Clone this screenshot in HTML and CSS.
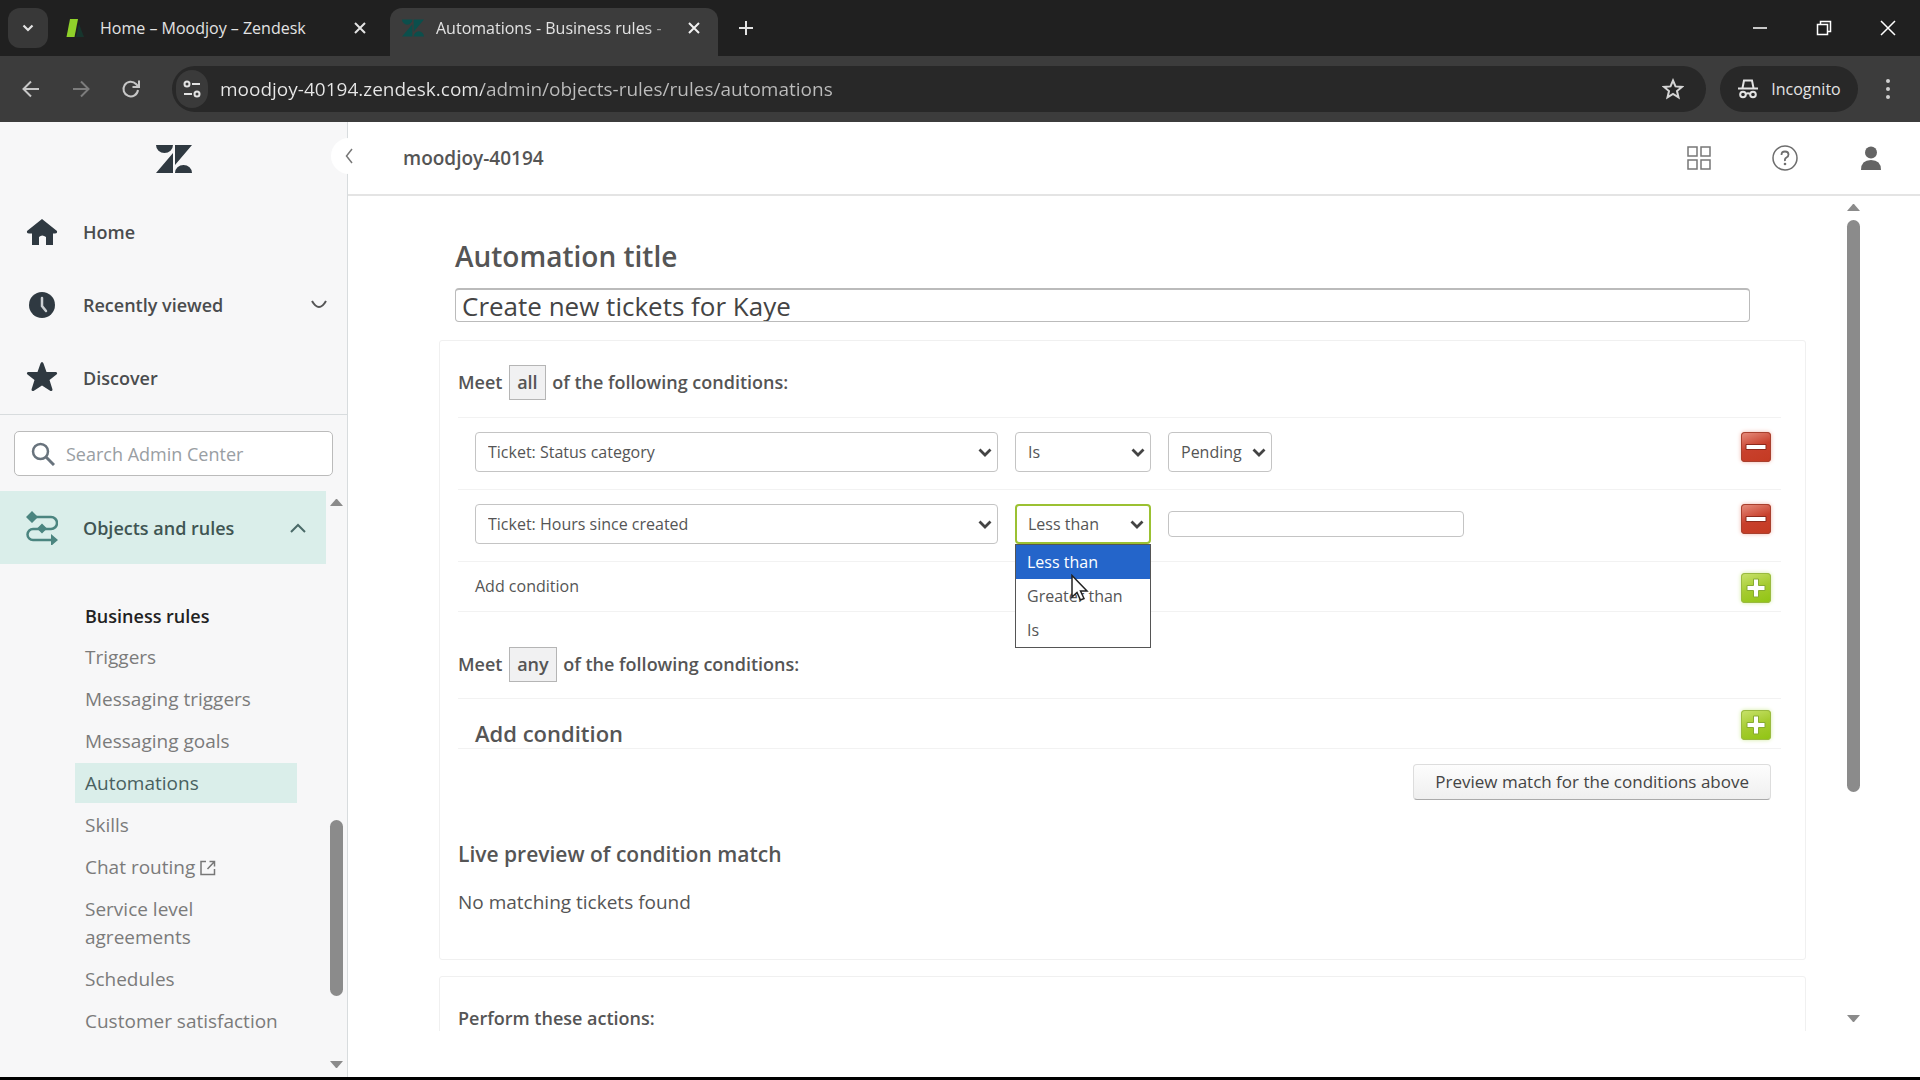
FILE: index.html
```html
<!DOCTYPE html>
<html lang="en">
<head>
    <meta charset="UTF-8">
    <title>Automations - Business rules - Admin Center</title>
    <link rel="stylesheet" href="styles.css">
</head>
<body>
    <div class="tabstrip">
        <button class="tab-search" aria-label="Search tabs">
            <svg width="16" height="16" viewBox="0 0 16 16"><path d="M3.5 5.5 8 10l4.500-4.500" fill="none" stroke="#e3e3e3" stroke-width="2.200"/></svg>
        </button>
        <div class="tab">
            <svg width="24" height="24" viewBox="0 0 24 24"><path d="M6 3h8l-3.500 18h-8z" fill="#8fd12a"/><path d="M15 8l5 13h-8z" fill="#17352d"/></svg>
            <span class="tab-title">Home – Moodjoy – Zendesk</span>
            <button class="tab-close" aria-label="Close tab"><svg width="14" height="14" viewBox="0 0 14 14"><path d="M2 2l10 10M12 2L2 12" stroke="#e3e3e3" stroke-width="2"/></svg></button>
        </div>
        <div class="tab active">
            <svg width="22" height="18" viewBox="0 0 36 28"><path d="M0 0h17a8.500 8.500 0 0 1-17 0zM17 8v20H0zM19 0h17L19 20zM19 28a8.500 8.500 0 0 1 17 0z" fill="#0b4f4c"/></svg>
            <span class="tab-title fade">Automations - Business rules -</span>
            <button class="tab-close" aria-label="Close tab"><svg width="14" height="14" viewBox="0 0 14 14"><path d="M2 2l10 10M12 2L2 12" stroke="#f1f1f1" stroke-width="2"/></svg></button>
        </div>
        <button class="tab-new" aria-label="New tab"><svg width="18" height="18" viewBox="0 0 18 18"><path d="M9 2v14M2 9h14" stroke="#e3e3e3" stroke-width="2"/></svg></button>
        <div class="window-buttons">
            <button aria-label="Minimize"><svg width="16" height="16" viewBox="0 0 16 16"><path d="M1 8h14" stroke="#fff" stroke-width="1.500"/></svg></button>
            <button aria-label="Restore"><svg width="16" height="16" viewBox="0 0 16 16"><path d="M1.500 4.500h10v10h-10zM4.500 4V1.500h10v10H12" fill="none" stroke="#fff" stroke-width="1.500"/></svg></button>
            <button aria-label="Close"><svg width="16" height="16" viewBox="0 0 16 16"><path d="M1 1l14 14M15 1L1 15" stroke="#fff" stroke-width="1.500"/></svg></button>
        </div>
    </div>

    <div class="toolbar">
        <button class="nav-btn" aria-label="Back"><svg width="20" height="20" viewBox="0 0 20 20"><path d="M18 10H3M10 2.500 2.500 10l7.500 7.500" fill="none" stroke="#c7c7c7" stroke-width="2"/></svg></button>
        <button class="nav-btn" aria-label="Forward"><svg width="20" height="20" viewBox="0 0 20 20"><path d="M2 10h15M10 2.500l7.500 7.500-7.500 7.500" fill="none" stroke="#7c7c7c" stroke-width="2"/></svg></button>
        <button class="nav-btn" aria-label="Reload"><svg width="20" height="20" viewBox="0 0 20 20"><path d="M17 11a7.300 7.300 0 1 1-2-6l2.500 2.500M18 1.500V8h-6.500" fill="none" stroke="#c7c7c7" stroke-width="2"/></svg></button>
        <div class="omnibox">
            <button class="site-info" aria-label="Site information"><svg width="20" height="20" viewBox="0 0 20 20"><g fill="none" stroke="#e3e3e3" stroke-width="2"><circle cx="5" cy="5" r="2.500"/><path d="M10 5h8M2 15h8"/><circle cx="15" cy="15" r="2.500"/></g></svg></button>
            <input class="url" type="text" aria-label="Address" value="moodjoy-40194.zendesk.com/admin/objects-rules/rules/automations">
            <button class="bookmark" aria-label="Bookmark"><svg width="22" height="22" viewBox="0 0 22 22"><path d="M11 2.500l2.500 5.900 6.400.5-4.900 4.200 1.500 6.300-5.500-3.400-5.500 3.400L7 13.100 2.100 8.900l6.400-.5z" fill="none" stroke="#d5d5d5" stroke-width="2"/></svg></button>
        </div>
        <button class="incognito">
            <svg width="22" height="22" viewBox="0 0 22 22"><g fill="none" stroke="#e3e3e3" stroke-width="2"><path d="M1 10.500h20M5.500 10l1.500-7.500h8L16.500 10"/><circle cx="6" cy="16.500" r="2.800"/><circle cx="16" cy="16.500" r="2.800"/><path d="M8.800 16c1.500-1 2.900-1 4.400 0"/></g></svg>
            Incognito
        </button>
        <button class="menu" aria-label="Menu"><svg width="6" height="22" viewBox="0 0 6 22"><g fill="#d0d0d0"><circle cx="3" cy="3" r="2"/><circle cx="3" cy="11" r="2"/><circle cx="3" cy="19" r="2"/></g></svg></button>
    </div>

    <div class="page">
        <nav class="sidebar">
            <a class="logo" href="#" aria-label="Zendesk"><svg width="36" height="28" viewBox="0 0 36 28"><path d="M0 0h17a8.500 8 0 0 1-17 0zM17 8v20H0zM19 0h17L19 20zM19 28a8.500 8 0 0 1 17 0z" fill="#2f3941"/></svg></a>
            <button class="collapse" aria-label="Collapse sidebar"><svg width="8" height="16" viewBox="0 0 8 16"><path d="M7 1 1.500 8 7 15" fill="none" stroke="#777" stroke-width="1.500"/></svg></button>
            <a class="nav-item" href="#">
                <svg width="32" height="28" viewBox="0 0 32 28"><path d="M16 1 31 13q.5 2.500-2 2.500h-2V27h-7v-8q-4-3-7 0v8H6V15.500H3q-2.500 0-2-2.500z" fill="#2f3941"/></svg>
                Home
            </a>
            <a class="nav-item" href="#">
                <svg width="32" height="28" viewBox="0 0 32 28"><circle cx="16" cy="14" r="13" fill="#2f3941"/><path d="M16 7v8l4 5" fill="none" stroke="#ccd0d3" stroke-width="2.500" stroke-linecap="round"/></svg>
                Recently viewed
                <svg class="chev" width="16" height="9" viewBox="0 0 16 9"><path d="M1 1q7 12 14 0" fill="none" stroke="#555" stroke-width="2"/></svg>
            </a>
            <a class="nav-item" href="#">
                <svg width="32" height="32" viewBox="0 0 32 32"><path d="M16 0q1 0 1.500 1.500L20.500 10H30q2 1 .5 2.500L23.500 18l3 9.500q0 2-2 1.500L16 23.500 7.500 29q-2 .5-2-1.500l3-9.500-7-5.500Q0 11 2 10h9.500l3-8.500Q15 0 16 0z" fill="#2f3941"/></svg>
                Discover
            </a>
            <label class="search">
                <svg width="24" height="24" viewBox="0 0 24 24"><circle cx="9.500" cy="9.500" r="7.500" fill="none" stroke="#68737d" stroke-width="2.500"/><path d="M15 15l8 8" stroke="#68737d" stroke-width="3"/></svg>
                <input type="text" placeholder="Search Admin Center" aria-label="Search Admin Center">
            </label>
            <div class="sidebar-scroll">
                <div class="sidebar-list">
                    <a class="nav-item current" href="#">
                        <svg width="32" height="34" viewBox="0 0 32 34"><path d="M5 6h20a5.500 5.500 0 0 1 0 12H7a5.500 5.500 0 0 0 0 11h18" fill="none" stroke="#4b8580" stroke-width="2.500"/><path d="M6 0l6 6-6 6-6-6zM16 12.500l5 5-5 5-5-5zM25 23l7 6-7 6z" fill="#4b8580"/></svg>
                        Objects and rules
                        <svg class="chev" width="16" height="10" viewBox="0 0 16 10"><path d="M1 9l7-7 7 7" fill="none" stroke="#4a6a68" stroke-width="2"/></svg>
                    </a>
                    <h2>Business rules</h2>
                    <ul>
                        <li><a href="#">Triggers</a></li>
                        <li><a href="#">Messaging triggers</a></li>
                        <li><a href="#">Messaging goals</a></li>
                        <li><a class="selected" href="#">Automations</a></li>
                        <li><a href="#">Skills</a></li>
                        <li><a href="#">Chat routing <svg width="16" height="16" viewBox="0 0 16 16"><path d="M6 1.500H1v13h13.500V9M9.500 1.500h5v5M14.500 1.500 7.500 9" fill="none" stroke="#777" stroke-width="1.500"/></svg></a></li>
                        <li><a href="#">Service level agreements</a></li>
                        <li><a href="#">Schedules</a></li>
                        <li><a href="#">Customer satisfaction</a></li>
                    </ul>
                </div>
                <div class="scrollbar side">
                    <i class="up"></i><i class="thumb"></i><i class="down"></i>
                </div>
            </div>
        </nav>

        <main class="main">
            <header class="topbar">
                <span class="account">moodjoy-40194</span>
                <button aria-label="Products"><svg width="24" height="24" viewBox="0 0 24 24"><path d="M1 1h9v9H1zM14 1h9v9h-9zM1 14h9v9H1zM14 14h9v9h-9z" fill="none" stroke="#777" stroke-width="1.500"/></svg></button>
                <button aria-label="Help"><svg width="26" height="26" viewBox="0 0 26 26"><circle cx="13" cy="13" r="12" fill="none" stroke="#6d6d6d" stroke-width="1.500"/><path d="M9.500 10q0-3.500 3.500-3.500t3.500 3q0 2-2 3T13 16" fill="none" stroke="#6d6d6d" stroke-width="1.800"/><circle cx="13" cy="19" r="1.300" fill="#6d6d6d"/></svg></button>
                <button aria-label="Profile"><svg width="20" height="24" viewBox="0 0 20 24"><circle cx="10" cy="6.500" r="6" fill="#646464"/><path d="M0 24q0-10 10-10t10 10z" fill="#646464"/></svg></button>
            </header>
            <div class="frame">
                <form class="content">
                    <div class="title-block">
                        <label for="title">Automation title</label>
                        <input id="title" type="text" value="Create new tickets for Kaye">
                    </div>
                    <section class="panel">
                        <h3>Meet <span class="kind">all</span> of the following conditions:</h3>
                        <div class="row">
                            <select class="field" aria-label="Condition"><option>Ticket: Status category</option></select>
                            <select class="operator" aria-label="Operator"><option>Is</option></select>
                            <select class="value" aria-label="Value"><option>Pending</option></select>
                            <button type="button" class="icon-btn remove" aria-label="Remove condition"><svg width="30" height="30" viewBox="0 0 30 30"><path d="M5 12.500h20v5H5z" fill="#fff" stroke="#8d2a1c"/></svg></button>
                        </div>
                        <div class="row">
                            <select class="field" aria-label="Condition"><option>Ticket: Hours since created</option></select>
                            <div class="open">
                                <select class="operator focus" aria-label="Operator"><option>Less than</option></select>
                                <ul class="options" role="listbox">
                                    <li class="on" role="option">Less than</li>
                                    <li role="option">Greater than</li>
                                    <li role="option">Is</li>
                                </ul>
                                <svg class="cursor" width="18" height="28" viewBox="0 0 18 28"><path d="M1 1.500v21.500l5-4.500 3.500 7.500 3.500-1.500-3.500-7.500H16z" fill="#fff" stroke="#222" stroke-width="1.500"/></svg>
                            </div>
                            <input class="hours" type="text" aria-label="Hours">
                            <button type="button" class="icon-btn remove" aria-label="Remove condition"><svg width="30" height="30" viewBox="0 0 30 30"><path d="M5 12.500h20v5H5z" fill="#fff" stroke="#8d2a1c"/></svg></button>
                        </div>
                        <div class="row add">
                            <span>Add condition</span>
                            <button type="button" class="icon-btn plus" aria-label="Add condition"><svg width="30" height="30" viewBox="0 0 30 30"><path d="M12.500 6h5v6.500H24v5h-6.500V24h-5v-6.500H6v-5h6.500z" fill="#fff" stroke="#87ac32"/></svg></button>
                        </div>
                        <h3>Meet <span class="kind">any</span> of the following conditions:</h3>
                        <div class="row add large">
                            <span>Add condition</span>
                            <button type="button" class="icon-btn plus" aria-label="Add condition"><svg width="30" height="30" viewBox="0 0 30 30"><path d="M12.500 6h5v6.500H24v5h-6.500V24h-5v-6.500H6v-5h6.500z" fill="#fff" stroke="#87ac32"/></svg></button>
                        </div>
                        <button type="button" class="preview">Preview match for the conditions above</button>
                        <h4>Live preview of condition match</h4>
                        <p>No matching tickets found</p>
                    </section>
                    <section class="panel">
                        <h3>Perform these actions:</h3>
                    </section>
                </form>
                <div class="scrollbar">
                    <i class="up"></i><i class="thumb"></i><i class="down"></i>
                </div>
            </div>
        </main>
    </div>
</body>
</html>
```
FILE: styles.css
```css
* {
    box-sizing: border-box;
}

body {
    margin: 0;
    height: 100vh;
    display: flex;
    flex-direction: column;
    overflow: hidden;
    border-bottom: 3px solid #000;
    font: 18px/28px "Open Sans", "Noto Sans", sans-serif;
    color: #555;
    background: #fff;
}

button {
    display: flex;
    align-items: center;
    justify-content: center;
    padding: 0;
    border: 0;
    background: none;
    font: inherit;
    color: inherit;
}

input,
select {
    font: inherit;
    color: inherit;
    outline: 0;
}

a {
    color: inherit;
    text-decoration: none;
}

ul {
    margin: 0;
    padding: 0;
    list-style: none;
}

svg {
    flex: none;
}

/* browser */
.tabstrip {
    flex: none;
    display: flex;
    height: 56px;
    padding: 8px 8px 0;
    background: #202020;
    color: #e3e3e3;
    font-size: 16px;
}

.tab-search {
    width: 40px;
    height: 40px;
    border-radius: 12px;
    background: #383838;
}

.tab {
    display: flex;
    align-items: center;
    width: 328px;
    height: 40px;
    margin-left: 14px;
    padding: 0 18px 0 2px;
}

.tab-title {
    flex: 1;
    margin-left: 12px;
    white-space: nowrap;
}

.tab-close {
    width: 24px;
    height: 24px;
}

.tab.active {
    height: 48px;
    margin-left: 0;
    padding: 0 12px 8px;
    border-radius: 12px 12px 0 0;
    background: #3c3c3c;
}

.fade {
    -webkit-mask-image: linear-gradient(90deg, #000 85%, transparent);
    mask-image: linear-gradient(90deg, #000 85%, transparent);
}

.tab-new {
    width: 40px;
    height: 40px;
    margin-left: 8px;
}

.window-buttons {
    display: flex;
    margin-left: auto;
}

.window-buttons button {
    width: 64px;
    height: 40px;
}

.window-buttons button:last-child {
    margin-right: -8px;
}

.toolbar {
    flex: none;
    display: flex;
    align-items: center;
    height: 66px;
    padding: 0 6px;
    background: #3c3c3c;
    color: #e3e3e3;
}

.nav-btn {
    width: 50px;
    height: 40px;
}

.omnibox {
    flex: 1;
    display: flex;
    align-items: center;
    height: 46px;
    margin: 0 14px 0 16px;
    padding: 0 22px 0 4px;
    border-radius: 23px;
    background: #282828;
}

.site-info {
    width: 32px;
    height: 38px;
    border-radius: 16px;
    background: #3a3a3a;
}

.url {
    flex: 1;
    margin-left: 12px;
    padding: 0;
    border: 0;
    font-size: 19px;
    color: transparent;
    background: linear-gradient(90deg, #e8e8e8 262px, #bdbdbd 262px);
    -webkit-background-clip: text;
    background-clip: text;
}

.incognito {
    gap: 12px;
    width: 138px;
    height: 46px;
    border-radius: 23px;
    background: #282828;
    font-size: 16px;
}

.menu {
    width: 52px;
    height: 40px;
    margin-left: 4px;
}

/* sidebar */
.page {
    flex: 1;
    display: flex;
    min-height: 0;
}

.sidebar {
    flex: none;
    position: relative;
    display: flex;
    flex-direction: column;
    width: 348px;
    border-right: 1px solid #d8dcde;
    background: #f7f7f8;
}

.logo {
    display: flex;
    justify-content: center;
    height: 73px;
    padding-top: 23px;
}

.collapse {
    position: absolute;
    top: 16px;
    right: -20px;
    width: 36px;
    height: 36px;
    border-radius: 50%;
    background: #fff;
}

.nav-item {
    display: flex;
    align-items: center;
    gap: 25px;
    height: 73px;
    padding: 0 20px 0 26px;
    font-weight: 600;
    color: #4a4c4e;
}

.chev {
    margin-left: auto;
}

.search {
    position: relative;
    display: flex;
    align-items: center;
    height: 45px;
    margin: 17px 14px 15px;
    padding: 0 16px;
    border: 1px solid #bbb;
    border-radius: 5px;
    background: #fff;
}

/* rule between the shortcuts and the search field */
.search::before {
    content: "";
    position: absolute;
    top: -18px;
    left: -15px;
    right: -15px;
    height: 1px;
    background: #d8dcde;
}

.search input {
    width: 240px;
    margin-left: 11px;
    padding: 0;
    border: 0;
    background: none;
}

.search input::placeholder {
    color: #999ea3;
}

.sidebar-scroll {
    flex: 1;
    display: flex;
    min-height: 0;
}

.sidebar-list {
    flex: 1;
    overflow: hidden;
}

.current {
    background: #daeeea;
    color: #3f5553;
}

.sidebar-list h2 {
    margin: 38px 0 7px 85px;
    font-size: 18px;
    font-weight: 600;
    line-height: 28px;
    color: #222;
}

.sidebar-list li {
    margin: 0 29px 2px 75px;
    font-size: 19px;
}

.sidebar-list li a {
    display: block;
    padding: 6px 10px;
    color: #7b7b7b;
}

.sidebar-list li a.selected {
    background: #daeeea;
    color: #49615f;
}

.sidebar-list li svg {
    vertical-align: -2px;
}

.scrollbar {
    flex: none;
    display: flex;
    flex-direction: column;
    width: 13px;
    padding: 8px 0 9px;
}

.scrollbar .up,
.scrollbar .down {
    border: 6px solid transparent;
    border-top: 0;
    border-bottom: 7px solid #8b8b8b;
}

.scrollbar .down {
    margin-top: auto;
    border-top: 7px solid #8b8b8b;
    border-bottom: 0;
}

.scrollbar .thumb {
    height: 572px;
    margin-top: 9px;
    border-radius: 7px;
    background: #8b8b8b;
}

.scrollbar.side {
    margin: 0 4px;
}

.side .thumb {
    height: 176px;
    margin-top: 314px;
}

/* main area */
.main {
    flex: 1;
    display: flex;
    flex-direction: column;
    min-width: 0;
}

.topbar {
    flex: none;
    display: flex;
    align-items: center;
    gap: 60px;
    height: 74px;
    padding: 0 36px 0 55px;
    border-bottom: 2px solid #e4e4e4;
    font-size: 19px;
    font-weight: 600;
}

.account {
    margin-right: auto;
}

.topbar button {
    width: 26px;
}

.frame {
    flex: 1;
    display: flex;
    min-height: 0;
    margin: 0 60px 46px 91px;
}

.content {
    flex: 1;
    overflow: hidden;
    padding-right: 41px;
}

.title-block {
    padding: 40px 56px 18px 16px;
}

.title-block label {
    display: block;
    margin-bottom: 12px;
    font-size: 28px;
    font-weight: 600;
    line-height: 40px;
}

.title-block input {
    display: block;
    width: 100%;
    height: 34px;
    padding: 0 6px;
    border: 1px solid #bbb;
    border-top-width: 2px;
    border-radius: 4px;
    font-size: 26px;
    line-height: 30px;
    color: #444;
}

.panel {
    height: 620px;
    margin-bottom: 16px;
    padding: 1px 24px 0 18px;
    border: 1px solid #f0f0f0;
    border-radius: 3px;
}

.panel h3 {
    margin: 20px 0 15px;
    font-size: 18px;
    font-weight: 600;
    line-height: 40px;
}

.kind {
    display: inline-block;
    margin: 0 2px;
    padding: 0 7px;
    border: 1px solid #b5b5b5;
    background: #f1f1f2;
    line-height: 33px;
}

.row {
    display: flex;
    align-items: flex-start;
    height: 72px;
    padding: 14px 10px 0 17px;
    border-top: 1px solid #f2f2f2;
    font-size: 16px;
}

select {
    height: 40px;
    margin-right: 17px;
    padding: 0 12px;
    border: 1px solid #c4c4c4;
    border-radius: 4px;
    appearance: none;
    background: #fff url("data:image/svg+xml,%3Csvg xmlns='http://www.w3.org/2000/svg' width='14' height='9'%3E%3Cpath d='M1.500 1.500 7 7l5.500-5.500' fill='none' stroke='%23444' stroke-width='2.800'/%3E%3C/svg%3E") no-repeat right 5px center;
}

.field {
    width: 523px;
}

.operator {
    width: 136px;
}

.value {
    width: 104px;
}

.focus {
    display: block;
    border: 2px solid #9bc132;
    padding: 0 11px;
}

.open {
    position: relative;
}

.options {
    position: absolute;
    top: 40px;
    left: 0;
    z-index: 1;
    width: 136px;
    border: 1px solid #555;
    background: #fff;
}

.options li {
    padding: 0 11px;
    line-height: 34px;
}

.options .on {
    background: #2465ca;
    color: #fff;
}

.cursor {
    position: absolute;
    top: 70px;
    left: 56px;
    z-index: 2;
}

.hours {
    width: 296px;
    height: 26px;
    margin-top: 7px;
    border: 1px solid #c4c4c4;
    border-radius: 4px;
}

.icon-btn {
    width: 30px;
    height: 30px;
    margin-left: auto;
    border-radius: 4px;
}

.remove {
    background: linear-gradient(160deg, #e79080, #c8402c 50%, #c43a22);
    box-shadow: inset 0 0 0 1px #a8402e, 0 0 4px #f0b5aa;
}

.plus {
    background: linear-gradient(160deg, #c9e36e, #a5cb2f 50%, #8fc412);
    box-shadow: inset 0 0 0 1px #9aba40, 0 0 4px #d3eca0;
}

.row.add {
    height: 51px;
    padding-top: 11px;
    border-bottom: 1px solid #f2f2f2;
}

.add span {
    line-height: 26px;
}

.large span {
    padding-top: 10px;
    font-size: 22px;
    font-weight: 600;
}

.row.add + h3 {
    margin: 32px 0 14px;
}

.preview {
    height: 36px;
    margin: 15px 10px 0 auto;
    padding: 0 21px;
    border: 1px solid #ddd;
    border-bottom-color: #aaa;
    border-radius: 4px;
    background: linear-gradient(#fdfdfd, #efefef);
    font-size: 17px;
    color: #444;
}

.panel h4 {
    margin: 40px 0 20px;
    font-size: 21px;
    font-weight: 600;
    line-height: 28px;
}

.panel p {
    margin: 0;
    font-size: 19px;
}
```
